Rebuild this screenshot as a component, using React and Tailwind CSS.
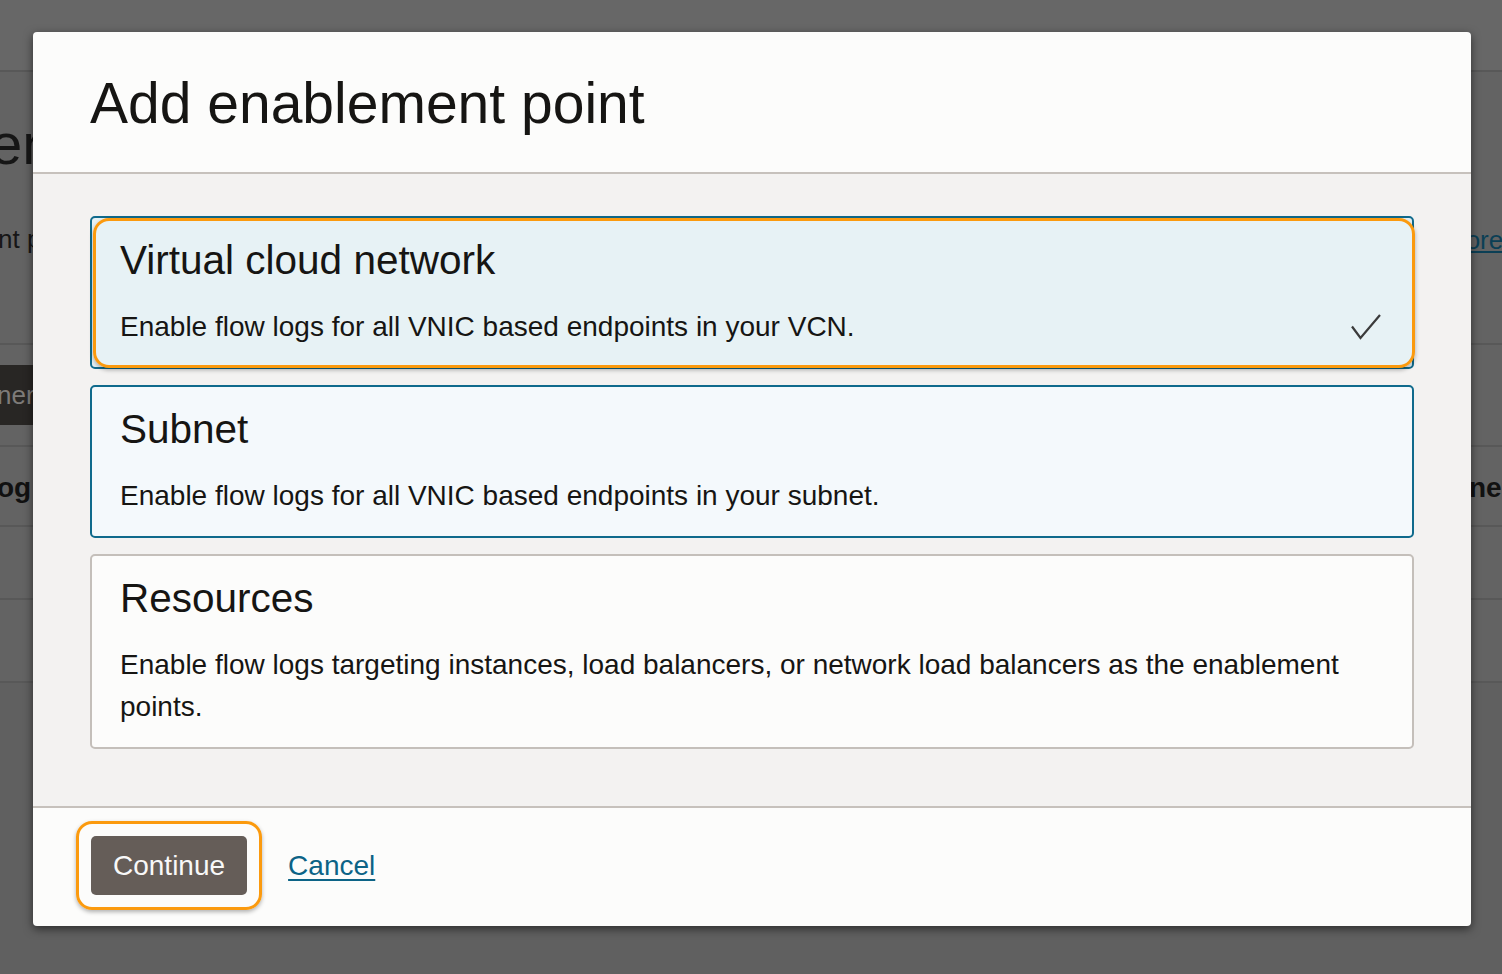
import React from "react";

const font = { fontFamily: '"Liberation Sans", Arial, Helvetica, sans-serif' };

/* dimmed page that sits behind the dialog */
function Backdrop() {
  return (
    <div className="flex flex-col w-full h-full">
      <div className="h-[72px] bg-[#676767] border-b-2 border-[#585858]" />
      <div className="h-[273px] flex justify-between border-b-2 border-[#585858]">
        <div className="w-[33px] overflow-hidden flex flex-col">
          <div className="mt-[42px] text-[58px] leading-[60px] text-[#161616] whitespace-nowrap -ml-[10px]">en</div>
          <div className="mt-[48px] text-[26px] leading-[34px] text-[#161616] whitespace-nowrap -ml-[2px]">nt p</div>
        </div>
        <div className="w-[31px] overflow-hidden flex flex-col">
          <div className="mt-[151px] text-[26px] leading-[34px] text-[#0b3f55] underline whitespace-nowrap -ml-[27px]">more</div>
        </div>
      </div>
      <div className="h-[102px] flex items-center justify-between border-b-2 border-[#585858]">
        <div className="w-[33px] h-[60px] bg-[#282624] overflow-hidden flex items-center">
          <span className="text-[26px] text-[#7e7b79] whitespace-nowrap -ml-[3px]">ner</span>
        </div>
      </div>
      <div className="h-[80px] flex items-center justify-between border-b-2 border-[#585858]">
        <div className="w-[33px] overflow-hidden">
          <span className="text-[28px] font-bold text-[#111] whitespace-nowrap -ml-[3px] mt-[4px] block">og</span>
        </div>
        <div className="w-[31px] overflow-hidden">
          <span className="text-[28px] font-bold text-[#111] whitespace-nowrap -ml-[2px] mt-[4px] block">ne</span>
        </div>
      </div>
      <div className="h-[73px] border-b-2 border-[#585858]" />
      <div className="h-[83px] border-b-2 border-[#585858]" />
      <div className="flex-1 bg-[#606060]" />
    </div>
  );
}

function Check() {
  return (
    <svg width="32" height="28" viewBox="0 0 32 28" className="flex-shrink-0">
      <polyline
        points="2,13.5 10.5,25 30,2"
        fill="none"
        stroke="#3b3b3b"
        strokeWidth="2.2"
      />
    </svg>
  );
}

function OptionCard({ title, text, selected, tone }) {
  const look =
    tone === "teal"
      ? selected
        ? "border-[#0f6a8c] bg-[#e7f2f5]"
        : "border-[#0f6a8c] bg-[#f4f9fc]"
      : "border-[#c4bfba] bg-[#fcfcfb]";

  return (
    <div className={`relative border-2 rounded-[5px] pl-[28px] pr-[30px] pt-[18px] pb-[19px] ${look}`}>
      {/* focus ring */}
      {selected && (
        <span className="absolute top-[0px] left-[1px] right-[-3px] bottom-[-1px] rounded-[16px] border-[3px] border-[#fb9a0e] shadow-[0_2px_4px_rgba(0,0,0,0.3)] pointer-events-none" />
      )}
      <div className="text-[40.5px] leading-[48px] text-[#161513] mb-[22px]">{title}</div>
      <div className="flex items-center justify-between gap-4">
        <p className="text-[28px] leading-[42px] text-[#161513]">{text}</p>
        {selected && <Check />}
      </div>
    </div>
  );
}

export default function App() {
  return (
    <div className="relative w-full h-[974px] bg-[#636363] overflow-hidden" style={font}>
      <Backdrop />

      {/* Dialog */}
      <div className="absolute top-[32px] left-[33px] w-[1438px] bg-[#fcfcfb] rounded-[4px] shadow-[0_3px_10px_rgba(0,0,0,0.55)] flex flex-col">
        {/* Header */}
        <div className="pl-[57px] pt-[37px] pb-[35px] border-b-2 border-[#c6c1bc]">
          <h1 className="text-[57px] leading-[68px] text-[#161513]">Add enablement point</h1>
        </div>

        {/* Options */}
        <div className="bg-[#f3f2f1] px-[57px] pt-[42px] pb-[57px] flex flex-col gap-4">
          <OptionCard
            title="Virtual cloud network"
            text="Enable flow logs for all VNIC based endpoints in your VCN."
            tone="teal"
            selected
          />
          <OptionCard
            title="Subnet"
            text="Enable flow logs for all VNIC based endpoints in your subnet."
            tone="teal"
          />
          <OptionCard
            title="Resources"
            text="Enable flow logs targeting instances, load balancers, or network load balancers as the enablement points."
          />
        </div>

        {/* Footer */}
        <div className="border-t-2 border-[#c6c1bc] pl-[43px] pt-[13px] pb-[16px] flex items-center gap-[26px]">
          <span className="p-[12px] border-[3px] border-[#fb9a0e] rounded-[16px] shadow-[0_2px_4px_rgba(0,0,0,0.3)]">
            <button className="h-[59px] px-[22px] bg-[#655d58] rounded-[5px] text-[28px] text-[#f8f8f8] block">
              Continue
            </button>
          </span>
          <a href="#" className="text-[28px] text-[#0c6386] underline underline-offset-[4px]">
            Cancel
          </a>
        </div>
      </div>
    </div>
  );
}
